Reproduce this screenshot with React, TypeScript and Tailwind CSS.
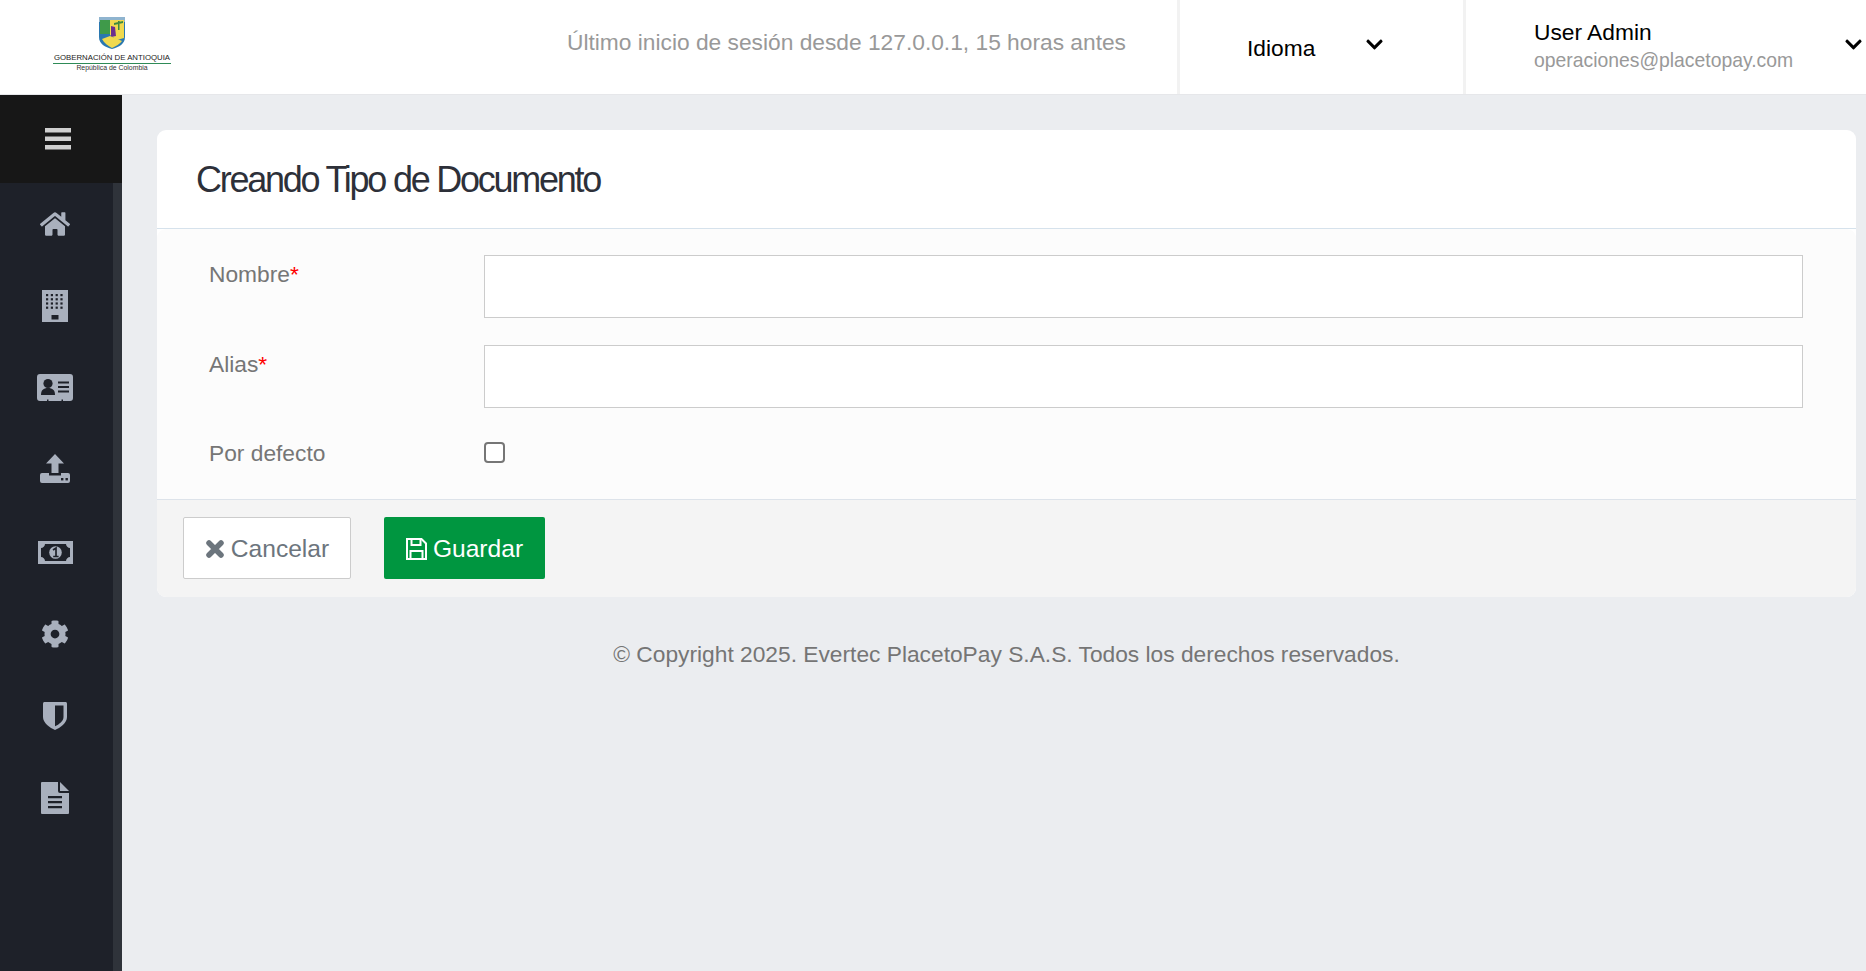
import { FaChevronDown, FaCog, FaHome } from "react-icons/fa";

const font = "font-['Liberation_Sans',Arial,sans-serif]";

function Logo() {
  return (
    <div className="flex w-[224px] shrink-0 flex-col items-center pt-[17px]">
      <svg width="26" height="32" viewBox="0 0 26 32">
        <path d="M0 0h26v20c0 7-6 10-13 12C6 30 0 27 0 20z" fill="#2a78b0" />
        <path d="M0 0h26v5H0z" fill="#8fb4cf" />
        <path d="M1 3h10v14H1z" fill="#3f9a4a" />
        <path d="M11 3h14v18l-7 2-7-5z" fill="#f0d94e" />
        <path d="M12 9l4 1 1 9-5 1z" fill="#6b2f8f" />
        <path d="M19 4h1.500v9H19zM15 6l9-2v2l-9 2z" fill="#3c8a3f" />
        <path d="M3 22l8-3 12 5c-2 3-6 5-10 7-4-2-8-5-10-9z" fill="#f0d94e" />
      </svg>
      <span className="mt-[3px] whitespace-nowrap border-b border-[#2e8b57] px-[1px] text-center text-[7.800px] leading-[11px] text-[#222]">
        GOBERNACIÓN DE ANTIOQUIA
      </span>
      <span className="whitespace-nowrap text-[6.900px] leading-[8px] text-[#333]">República de Colombia</span>
    </div>
  );
}

function BarsIcon() {
  return (
    <svg width="26" height="22" viewBox="0 0 26 22">
      <path d="M0 0h26v4.500H0zM0 8.500h26V13H0zM0 17h26v4.500H0z" fill="#cfcfcf" />
    </svg>
  );
}

function BuildingIcon() {
  const dots = [];
  for (let r = 0; r < 4; r++) {
    for (let c = 0; c < 4; c++) {
      dots.push(<rect key={`${r}-${c}`} x={4 + c * 4.800} y={4 + r * 4.200} width="2.200" height="2.200" fill="#1e2129" />);
    }
  }
  return (
    <svg width="26" height="32" viewBox="0 0 26 32">
      <rect width="26" height="32" fill="#a9b0bd" />
      {dots}
      <rect x="9.500" y="25" width="7" height="4.500" fill="#1e2129" />
    </svg>
  );
}

function CardIcon() {
  return (
    <svg width="36" height="27" viewBox="0 0 36 27" className="mb-[1px]">
      <path d="M3 0h30a3 3 0 0 1 3 3v21a3 3 0 0 1-3 3h-7v-1.500h-1.500V27H11.500v-1.500H10V27H3a3 3 0 0 1-3-3V3a3 3 0 0 1 3-3z" fill="#a9b0bd" />
      <circle cx="11" cy="9.500" r="4.600" fill="#1e2129" />
      <path d="M4 21c0-5 2.500-7 7-7s7 2 7 7z" fill="#1e2129" />
      <path d="M21 7.500h11v2H21zM21 12h11v2H21zM21 16.500h11v2H21z" fill="#1e2129" />
    </svg>
  );
}

function UploadIcon() {
  return (
    <svg width="30" height="29" viewBox="0 0 30 29" className="mb-[3px]">
      <path d="M15 0l9 9.500h-5.500V19h-7V9.500H6z" fill="#a9b0bd" />
      <path d="M2 19h7v2.500h12V19h7a2 2 0 0 1 2 2v6a2 2 0 0 1-2 2H2a2 2 0 0 1-2-2v-6a2 2 0 0 1 2-2z" fill="#a9b0bd" />
      <rect x="21" y="24" width="2.400" height="2.400" fill="#1e2129" />
      <rect x="25.500" y="24" width="2.400" height="2.400" fill="#1e2129" />
    </svg>
  );
}

function MoneyIcon() {
  return (
    <svg width="35" height="23" viewBox="0 0 35 23">
      <rect width="35" height="23" fill="#a9b0bd" />
      <path d="M7 3h21c0 2 2 4 4 4v9c-2 0-4 2-4 4H7c0-2-2-4-4-4V7c2 0 4-2 4-4z" fill="#1e2129" />
      <circle cx="17.500" cy="11.500" r="6.300" fill="#a9b0bd" />
      <path d="M15 9l3-2v8M15.200 15.500h5.400" stroke="#1e2129" strokeWidth="1.700" fill="none" />
    </svg>
  );
}

function ShieldIcon() {
  return (
    <svg width="24" height="28" viewBox="0 0 24 28">
      <path d="M1.500 0h21c.8 0 1.500.7 1.500 1.500V15c0 6-7 11-12 13C7 26 0 21 0 15V1.500C0 .7.7 0 1.500 0z" fill="#a9b0bd" />
      <path d="M12 3.500h8.500V15c0 4-4.500 7.500-8.500 9.300z" fill="#1e2129" />
    </svg>
  );
}

function FileIcon() {
  return (
    <svg width="28" height="32" viewBox="0 0 28 32">
      <path d="M1 0h16v9a2 2 0 0 0 2 2h9v20a1 1 0 0 1-1 1H1a1 1 0 0 1-1-1V1a1 1 0 0 1 1-1z" fill="#a9b0bd" />
      <path d="M19 0l9 9h-9z" fill="#a9b0bd" />
      <path d="M7 14h14v2.300H7zM7 19h14v2.300H7zM7 24h14v2.300H7z" fill="#1e2129" />
    </svg>
  );
}

function TimesIcon() {
  return (
    <svg width="18" height="18" viewBox="0 0 18 18" className="ml-[1px]">
      <path d="M3 3l12 12M15 3L3 15" stroke="currentColor" strokeWidth="5.500" strokeLinecap="round" />
    </svg>
  );
}

function SaveIcon() {
  return (
    <svg width="21" height="22" viewBox="0 0 21 22" fill="none" stroke="currentColor" strokeWidth="2">
      <path d="M1 1h14.500L20 5.500V21H1z" />
      <path d="M5.500 1v6h9V1M4.500 21v-8h12v8" />
    </svg>
  );
}

const navItems = [
  <FaHome key="home" size={30} color="#a9b0bd" />,
  <BuildingIcon key="building" />,
  <CardIcon key="card" />,
  <UploadIcon key="upload" />,
  <MoneyIcon key="money" />,
  <FaCog key="cog" size={28} color="#a9b0bd" />,
  <ShieldIcon key="shield" />,
  <FileIcon key="file" />,
];

export default function App() {
  return (
    <div className={`${font} flex h-[971px] flex-col overflow-hidden bg-[#ebedf0]`}>
      <header className="flex h-[95px] shrink-0 border-b border-[#e6e7ea] bg-white">
        <Logo />
        <div className="flex flex-1 justify-end pr-[51px] pt-[26px] text-[22.750px] leading-[32px] text-[#999]">
          Último inicio de sesión desde 127.0.0.1, 15 horas antes
        </div>
        <div className="flex w-[289px] shrink-0 border-x-[3px] border-[#f2f2f2] pl-[67px] pt-[32px] text-[22.750px] leading-[32px] text-black">
          <span>Idioma</span>
          <FaChevronDown size={19} className="ml-[50px] mt-[3px]" />
        </div>
        <div className="flex w-[400px] shrink-0 pl-[68px]">
          <div className="flex w-[320px] flex-col pt-[18px]">
            <span className="text-[22.750px] leading-[28px] text-black">User Admin</span>
            <span className="text-[19.350px] leading-[28px] text-[#999]">operaciones@placetopay.com</span>
          </div>
          <FaChevronDown size={19} className="ml-[-10px] mt-[35px]" />
        </div>
      </header>
      <div className="flex flex-1">
        <aside className="flex w-[122px] shrink-0 flex-col bg-[#1e2129]">
          <div className="flex h-[88px] items-center justify-center bg-[#171717] pr-[7px]">
            <BarsIcon />
          </div>
          <div className="flex flex-1">
            <nav className="flex w-[113px] flex-col pr-[3px]">
              {navItems.map((icon, i) => (
                <div key={i} className="flex h-[82px] items-center justify-center">
                  {icon}
                </div>
              ))}
            </nav>
            <div className="w-[9px] bg-[#2f333a]" />
          </div>
        </aside>
        <main className="flex-1 pl-[35px] pr-[10px] pt-[35px]">
          <section className="rounded-[9px] bg-white">
            <div className="flex h-[99px] items-center border-b border-[#d6e2ec] pl-[39px] pt-[2px]">
              <h1 className="text-[36px] tracking-[-2.250px] text-[#2d3039]">Creando Tipo de Documento</h1>
            </div>
            <div className="rounded-t-[9px] bg-[#fcfcfc] pb-[27px] pl-[52px] pr-[53px] pt-[26px] text-[22.750px] text-[#767676]">
              <div className="mb-[27px] flex">
                <label className="w-[275px] leading-[38px]">
                  Nombre<span className="text-[#ff0000]">*</span>
                </label>
                <input className="h-[63px] flex-1 border border-[#ccc] bg-white" />
              </div>
              <div className="mb-[26px] flex">
                <label className="w-[275px] leading-[38px]">
                  Alias<span className="text-[#ff0000]">*</span>
                </label>
                <input className="h-[63px] flex-1 border border-[#ccc] bg-white" />
              </div>
              <div className="flex items-center">
                <label className="w-[275px] leading-[38px]">Por defecto</label>
                <input type="checkbox" className="mb-[2px] h-[21px] w-[21px] appearance-none rounded-[4px] border-2 border-[#767676] bg-white" />
              </div>
            </div>
            <div className="flex gap-[33px] rounded-b-[9px] border-t border-[#dde3ea] bg-[#f4f4f4] pb-[18px] pl-[26px] pt-[17px] text-[24.600px]">
              <button className="flex h-[62px] w-[168px] items-center justify-center gap-[7px] rounded-[2px] border border-[#ccc] bg-white pt-[2px] text-[#6c757d]">
                <TimesIcon />
                Cancelar
              </button>
              <button className="flex h-[62px] w-[161px] items-center justify-center gap-[6px] rounded-[2px] bg-[#009640] pt-[2px] text-white">
                <SaveIcon />
                Guardar
              </button>
            </div>
          </section>
          <p className="mt-[41px] text-center text-[22.750px] leading-[32px] text-[#757575]">
            © Copyright 2025. Evertec PlacetoPay S.A.S. Todos los derechos reservados.
          </p>
        </main>
      </div>
    </div>
  );
}
